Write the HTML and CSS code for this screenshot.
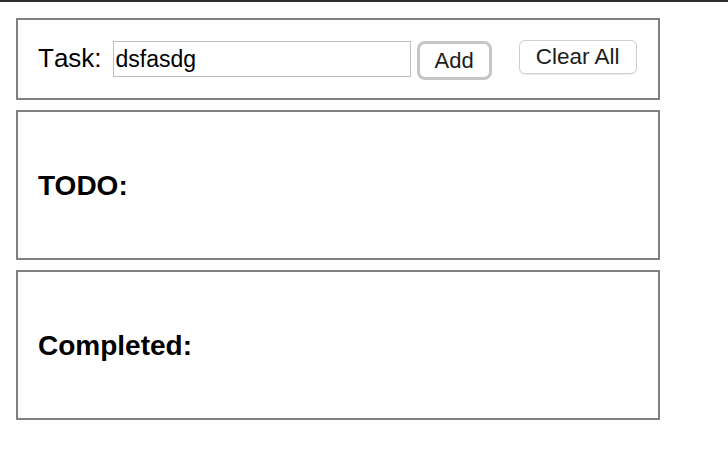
FILE: index.html
```html
<!DOCTYPE html>
<html lang="en">
<head>
<meta charset="utf-8">
<title>Todo</title>
<link rel="stylesheet" href="styles.css">
</head>
<body>
<div class="topbar"></div>
<main class="app">
  <section class="panel panel-form">
    <label class="task-label" for="task">Task:</label>
    <input class="task-input" id="task" type="text" value="dsfasdg">
    <button class="btn btn-add" type="button">Add</button>
    <button class="btn btn-clear" type="button">Clear All</button>
  </section>
  <section class="panel panel-list">
    <h3 class="list-title">TODO:</h3>
  </section>
  <section class="panel panel-list">
    <h3 class="list-title">Completed:</h3>
  </section>
</main>
</body>
</html>
```
FILE: styles.css
```css
html, body {
  margin: 0;
  padding: 0;
  background: #ffffff;
}

body {
  font-family: "Liberation Sans", Helvetica, Arial, sans-serif;
  color: #000000;
}

.topbar {
  height: 2px;
  background: #2e2f2b;
}

.app {
  width: 644px;
  padding: 16px 0 0 16px;
  display: flex;
  flex-direction: column;
  gap: 10px;
}

.panel {
  box-sizing: border-box;
  border: 2px solid #808080;
  background: #ffffff;
}

.panel-form {
  height: 82px;
  padding: 20px 20px 0 20px;
  display: flex;
  align-items: flex-start;
}

.task-label {
  font-size: 26px;
  line-height: 37px;
  font-kerning: none;
  margin-right: 11px;
}

.task-input {
  box-sizing: border-box;
  width: 298px;
  height: 36px;
  margin: 1px 0 0 0;
  padding: 0 2px;
  border: 1px solid #bfbfbf;
  border-radius: 0;
  font-family: inherit;
  font-size: 23px;
  color: #000000;
  background: #ffffff;
  outline: none;
}

.btn {
  box-sizing: border-box;
  background: #ffffff;
  font-family: inherit;
  color: #1c1c1c;
  padding: 0;
  cursor: pointer;
}

.btn-add {
  width: 75px;
  height: 39px;
  margin: 1px 0 0 6px;
  border: 3px solid #c6c6c6;
  border-radius: 8px;
  font-size: 22px;
}

.btn-clear {
  width: 118px;
  height: 34px;
  margin: 0 0 0 27px;
  border: 1px solid #cfcfcf;
  border-radius: 6px;
  font-size: 22.5px;
  box-shadow: 0 1px 1px rgba(0, 0, 0, 0.08);
}

.panel-list {
  height: 150px;
  padding: 2px 20px 0 20px;
  display: flex;
  align-items: center;
}

.list-title {
  margin: 0;
  font-size: 28px;
  font-weight: bold;
  line-height: 1;
}
```
